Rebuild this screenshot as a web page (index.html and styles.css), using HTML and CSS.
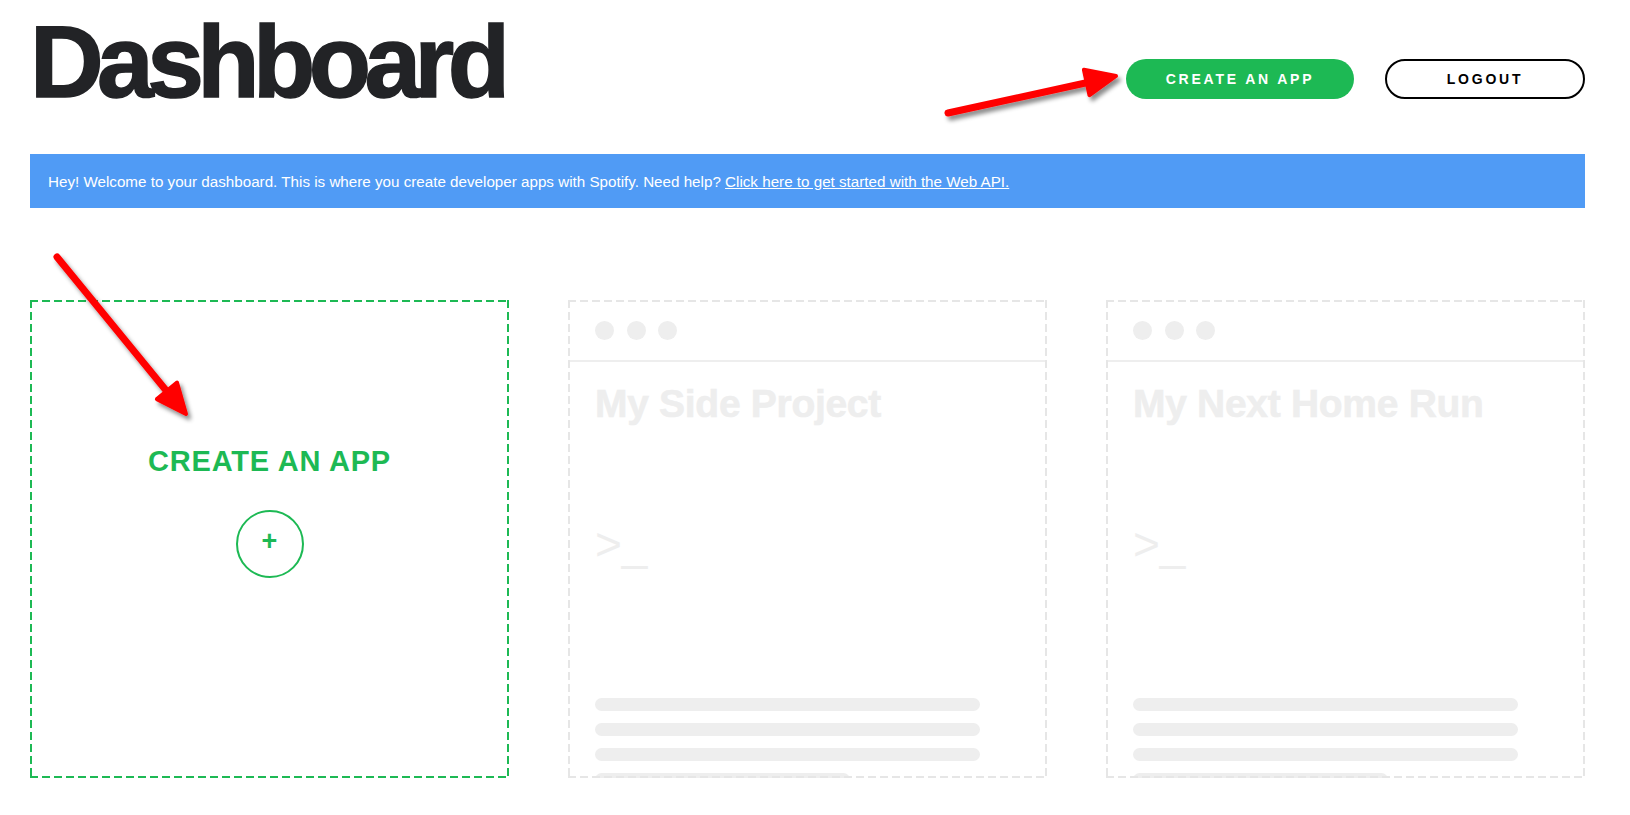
FILE: index.html
```html
<!DOCTYPE html>
<html lang="en">
<head>
<meta charset="utf-8">
<title>Dashboard</title>
<link rel="stylesheet" href="styles.css">
</head>
<body>
<div class="page">
  <header class="topbar">
    <h1 class="title">Dashboard</h1>
    <div class="actions">
      <a class="btn btn-primary" href="#">CREATE AN APP</a>
      <a class="btn btn-outline" href="#">LOGOUT</a>
    </div>
  </header>

  <div class="notice">
    <span>Hey! Welcome to your dashboard. This is where you create developer apps with Spotify. Need help? <a href="#">Click here to get started with the Web API.</a></span>
  </div>

  <main class="cards">
    <div class="card card-create">
      <div class="create-label">CREATE AN APP</div>
      <div class="create-plus">+</div>
    </div>

    <div class="card card-ghost">
      <div class="ghost-head">
        <span class="dot"></span><span class="dot"></span><span class="dot"></span>
      </div>
      <div class="ghost-body">
        <div class="ghost-title">My Side Project</div>
        <div class="ghost-prompt">&gt;_</div>
        <div class="ghost-lines">
          <span class="bar"></span>
          <span class="bar"></span>
          <span class="bar"></span>
          <span class="bar bar-short"></span>
        </div>
      </div>
    </div>

    <div class="card card-ghost">
      <div class="ghost-head">
        <span class="dot"></span><span class="dot"></span><span class="dot"></span>
      </div>
      <div class="ghost-body">
        <div class="ghost-title">My Next Home Run</div>
        <div class="ghost-prompt">&gt;_</div>
        <div class="ghost-lines">
          <span class="bar"></span>
          <span class="bar"></span>
          <span class="bar"></span>
          <span class="bar bar-short"></span>
        </div>
      </div>
    </div>
  </main>

  <svg class="annotations" width="1630" height="815" viewBox="0 0 1630 815" aria-hidden="true">
    <defs>
      <filter id="arrowShadow" x="-20%" y="-20%" width="140%" height="140%">
        <feDropShadow dx="3" dy="4" stdDeviation="2.2" flood-color="#000" flood-opacity="0.45"/>
      </filter>
    </defs>
    <g filter="url(#arrowShadow)" fill="#ff0000" stroke="#ff0000" stroke-linecap="round" stroke-linejoin="round">
      <line x1="948" y1="113" x2="1090" y2="82" stroke-width="7"/>
      <polygon points="1116,76 1089.5,95.2 1083.9,69.8" stroke-width="4"/>
      <line x1="57" y1="257" x2="169" y2="394" stroke-width="7"/>
      <polygon points="186,414 156.9,399.1 177,382.5" stroke-width="4"/>
    </g>
  </svg>
</div>
</body>
</html>
```

FILE: styles.css
```css
html, body {
  margin: 0;
  padding: 0;
  background: #ffffff;
}

body {
  font-family: "Liberation Sans", Arial, sans-serif;
  color: #222326;
  overflow: hidden;
}

.page {
  position: relative;
  width: 1630px;
  height: 815px;
  box-sizing: border-box;
  padding: 11px 45px 0 30px;
}

/* ---------- header ---------- */
.topbar {
  display: flex;
  justify-content: space-between;
  align-items: flex-start;
}

.title {
  margin: 0;
  font-size: 102px;
  line-height: 102px;
  font-weight: 700;
  letter-spacing: -6.6px;
  color: #222326;
  -webkit-text-stroke: 1.5px #222326;
}

.actions {
  display: flex;
  gap: 31px;
  margin-top: 48px;
}

.btn {
  display: flex;
  align-items: center;
  justify-content: center;
  box-sizing: border-box;
  height: 40px;
  border-radius: 20px;
  font-size: 14px;
  font-weight: 700;
  letter-spacing: 2.8px;
  text-decoration: none;
}

.btn-primary {
  width: 228px;
  background: #1db954;
  color: #ffffff;
}

.btn-outline {
  width: 200px;
  border: 2px solid #000000;
  color: #000000;
  background: #ffffff;
}

/* ---------- notice ---------- */
.notice {
  display: flex;
  align-items: center;
  box-sizing: border-box;
  height: 54px;
  margin-top: 41px;
  padding: 0 18px;
  background: #509bf5;
  color: #ffffff;
  font-size: 15.2px;
}

.notice a {
  color: #ffffff;
  text-decoration: underline;
}

/* ---------- cards ---------- */
.cards {
  display: grid;
  grid-template-columns: repeat(3, 1fr);
  column-gap: 59px;
  margin-top: 92px;
}

.card {
  position: relative;
  box-sizing: border-box;
  height: 478px;
  padding: 2px;
  overflow: hidden;
  --dash: #e6e6e6;
}

.card::after {
  content: "";
  position: absolute;
  inset: 0;
  pointer-events: none;
  background:
    repeating-linear-gradient(90deg, var(--dash) 0 8px, transparent 8px 12px) left top / 100% 2px no-repeat,
    repeating-linear-gradient(90deg, var(--dash) 0 8px, transparent 8px 12px) left bottom / 100% 2px no-repeat,
    repeating-linear-gradient(180deg, var(--dash) 0 8px, transparent 8px 12px) left top / 2px 100% no-repeat,
    repeating-linear-gradient(180deg, var(--dash) 0 8px, transparent 8px 12px) right top / 2px 100% no-repeat;
}

/* create card */
.card-create {
  --dash: #1db954;
  display: flex;
  flex-direction: column;
  align-items: center;
  padding-top: 144px;
}

.create-label {
  font-size: 29px;
  line-height: 34px;
  font-weight: 700;
  letter-spacing: 0.8px;
  color: #1db954;
}

.create-plus {
  display: flex;
  align-items: center;
  justify-content: center;
  box-sizing: border-box;
  width: 68px;
  height: 68px;
  margin-top: 32px;
  border: 2px solid #1db954;
  border-radius: 50%;
  color: #1db954;
  font-size: 27px;
  font-weight: 700;
  line-height: 1;
  padding-bottom: 5px;
}

/* ghost cards */
.ghost-head {
  display: flex;
  gap: 12.5px;
  padding: 19px 25px 20px 25px;
  border-bottom: 2px solid #eeeeee;
}

.dot {
  width: 19px;
  height: 19px;
  border-radius: 50%;
  background: #eeeeee;
}

.ghost-body {
  display: flex;
  flex-direction: column;
  padding: 0 25px;
}

.ghost-title {
  margin-top: 19px;
  font-size: 39px;
  line-height: 46px;
  font-weight: 700;
  letter-spacing: -0.3px;
  color: #eeeeee;
  white-space: nowrap;
  -webkit-text-stroke: 0.6px #eeeeee;
}

.ghost-prompt {
  margin-top: 92px;
  font-size: 46px;
  line-height: 50px;
  font-weight: 400;
  color: #eeeeee;
}

.ghost-lines {
  display: flex;
  flex-direction: column;
  gap: 12px;
  margin-top: 129px;
}

.bar {
  display: block;
  width: 385px;
  height: 13px;
  border-radius: 7px;
  background: #eeeeee;
}

.bar-short {
  width: 255px;
}

/* ---------- annotation overlay ---------- */
.annotations {
  position: absolute;
  top: 0;
  left: 0;
  pointer-events: none;
}
```
